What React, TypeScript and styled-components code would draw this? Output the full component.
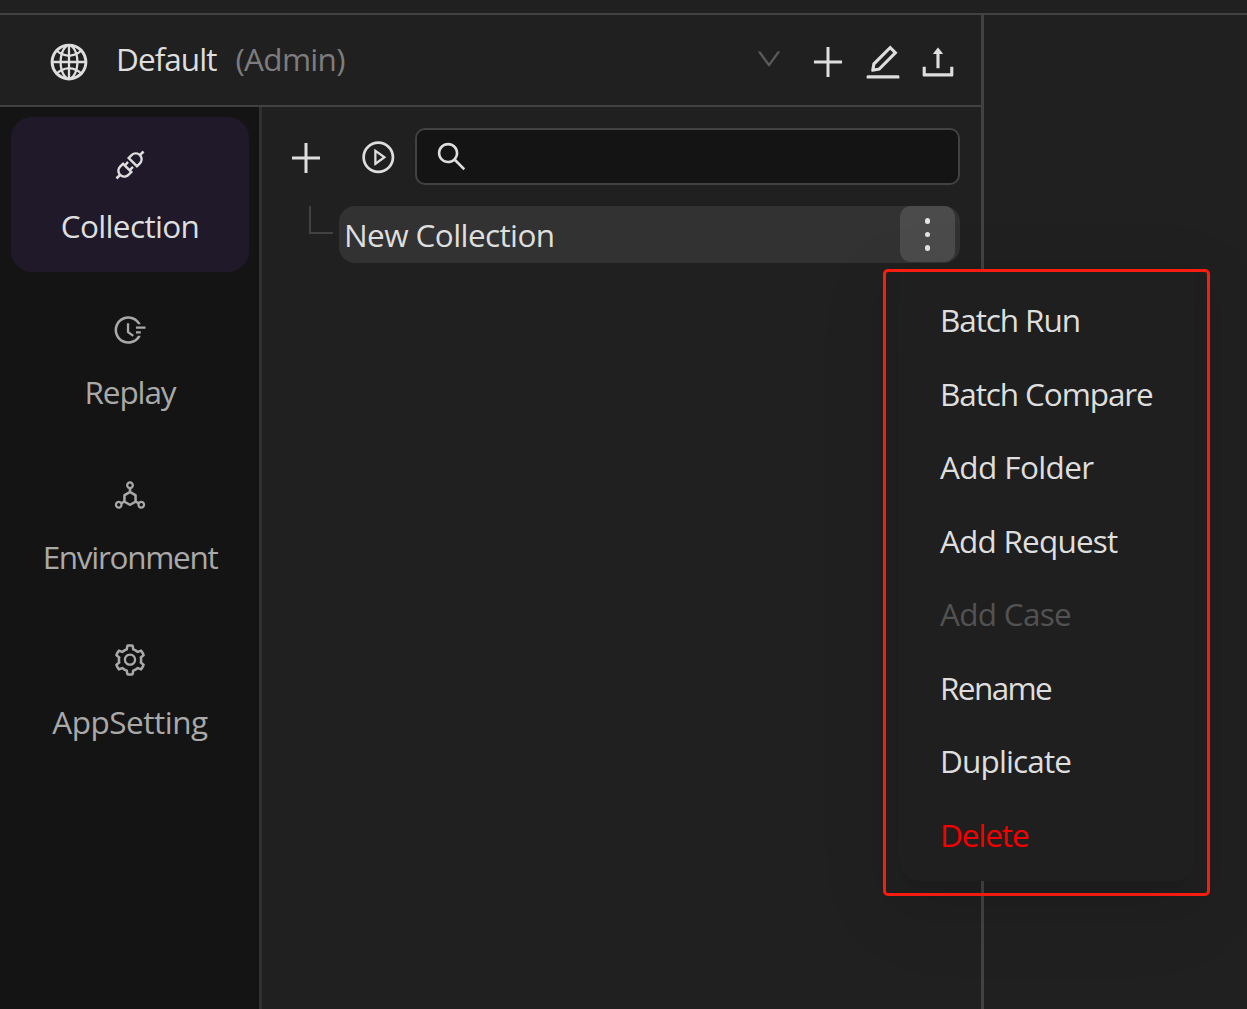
import React from "react";
import styled, { createGlobalStyle } from "styled-components";
import {
  AiOutlineApi,
  AiOutlineDeploymentUnit,
  AiOutlineDown,
  AiOutlineEdit,
  AiOutlineFieldTime,
  AiOutlineGlobal,
  AiOutlinePlayCircle,
  AiOutlineSearch,
  AiOutlineSetting,
  AiOutlineUpload,
} from "react-icons/ai";

const line = "#424242";
const text = "#dedede";

const GlobalStyle = createGlobalStyle`
  * { box-sizing: border-box; }
  body {
    margin: 0;
    background: #202020;
    color: ${text};
    font-family: "Open Sans", "Noto Sans", sans-serif;
    font-size: 31.5px;
    line-height: 44px;
    overflow: hidden;
  }
  svg { display: block; flex: none; }
`;

const Page = styled.div`
  height: 1009px;
  display: flex;
  flex-direction: column;
  overflow: hidden;
`;

const TopStrip = styled.div`
  height: 15px;
  flex: none;
  border-bottom: 2px solid ${line};
`;

const Body = styled.div`
  flex: 1;
  display: flex;
  min-height: 0;
`;

const Workspace = styled.div`
  width: 984px;
  display: flex;
  flex-direction: column;
  border-right: 3px solid ${line};
`;

const Header = styled.header`
  height: 92px;
  flex: none;
  display: flex;
  align-items: center;
  padding: 4px 22px 0 48px;
  border-bottom: 2px solid ${line};
`;

const Label = styled.span<{ $spacing?: number }>`
  white-space: nowrap;
  letter-spacing: ${(p) => p.$spacing ?? 0}px;
`;

const WorkspaceName = styled(Label)`
  margin: -6px 0 0 26px;
`;

const Role = styled(Label)`
  margin: -6px auto 0 19px;
  color: #7d7d7d;
`;

const Arrow = styled.span`
  margin: -6px 23px 0 0;
  color: #5b5b5b;
`;

const HeaderActions = styled.div`
  display: flex;
  gap: 13px;
`;

const Main = styled.div`
  flex: 1;
  display: flex;
  min-height: 0;
`;

const Sidebar = styled.nav`
  width: 262px;
  flex: none;
  padding: 10px 10px 0 11px;
  display: flex;
  flex-direction: column;
  gap: 10.3px;
  background: #141414;
  border-right: 3px solid #303030;
`;

const NavItem = styled.div<{ $active?: boolean }>`
  height: 155px;
  flex: none;
  border-radius: 21px;
  display: flex;
  flex-direction: column;
  align-items: center;
  padding-top: 29.6px;
  gap: 21.7px;
  color: ${(p) => (p.$active ? text : "#a9a9a9")};
  background: ${(p) => (p.$active ? "#201929" : "transparent")};
`;

const Panel = styled.section`
  flex: 1;
  padding: 21px 21px 0 23px;
`;

const Toolbar = styled.div`
  display: flex;
  align-items: center;
  height: 57px;
`;

const AddButton = styled.div`
  margin-top: 3px;
`;

const PlayButton = styled.div`
  margin: 2px 18.5px 0 32.5px;
`;

const SearchBox = styled.div`
  flex: 1;
  height: 57px;
  display: flex;
  align-items: center;
  padding-left: 17px;
  border: 2px solid ${line};
  border-radius: 10px;
  background: #141414;
`;

const TreeRow = styled.div`
  display: flex;
  margin-top: 21px;
  padding-left: 24px;
`;

const Branch = styled.div`
  width: 24px;
  height: 28px;
  margin-right: 6px;
  border-left: 2px solid ${line};
  border-bottom: 2px solid ${line};
`;

const TreeNode = styled.div`
  flex: 1;
  height: 57px;
  display: flex;
  align-items: flex-start;
  justify-content: space-between;
  padding: 0 5px;
  border-radius: 16px;
  background: #323232;
`;

const NodeName = styled(Label)`
  padding-top: 7px;
`;

const MoreButton = styled.div`
  width: 55px;
  height: 56px;
  border-radius: 11px;
  background: #4b4b4b;
  display: flex;
  flex-direction: column;
  align-items: center;
  justify-content: center;
  padding-top: 1px;
  gap: 7.8px;
`;

const Dot = styled.i`
  width: 5.6px;
  height: 5.6px;
  border-radius: 50%;
  background: #e4e4e4;
`;

const MenuFrame = styled.div`
  position: absolute;
  left: 883px;
  top: 269px;
  width: 327px;
  height: 627px;
  border: 3px solid #ff1e10;
  border-radius: 5px;
  padding: 0 12px;
`;

const Menu = styled.ul`
  margin: 0;
  height: 609px;
  padding: 11.7px 0 9px;
  list-style: none;
  border-radius: 0 0 21px 21px;
  background: #1f1f1f;
  box-shadow: 0 16px 43px rgba(0, 0, 0, 0.04), 0 8px 16px -11px rgba(0, 0, 0, 0.06),
    0 24px 75px 21px rgba(0, 0, 0, 0.05);
`;

const MenuItem = styled.li<{ $color?: string }>`
  height: 73.5px;
  display: flex;
  align-items: center;
  padding-left: 42px;
  color: ${(p) => p.$color ?? text};
`;

const PlusIcon = () => (
  <svg width="42" height="42" viewBox="0 0 42 42" stroke="currentColor" strokeWidth="3">
    <path d="M7 21h28M21 6v30" />
  </svg>
);

const navItems = [
  { label: "Collection", Icon: AiOutlineApi, spacing: -0.63 },
  { label: "Replay", Icon: AiOutlineFieldTime, spacing: -1.1 },
  { label: "Environment", Icon: AiOutlineDeploymentUnit, spacing: -1.3 },
  { label: "AppSetting", Icon: AiOutlineSetting, spacing: -0.5 },
];

const menuItems: { label: string; spacing: number; color?: string }[] = [
  { label: "Batch Run", spacing: -1.1 },
  { label: "Batch Compare", spacing: -1.1 },
  { label: "Add Folder", spacing: -0.6 },
  { label: "Add Request", spacing: -0.8 },
  { label: "Add Case", spacing: -0.7, color: "#525252" },
  { label: "Rename", spacing: -1.6 },
  { label: "Duplicate", spacing: -0.85 },
  { label: "Delete", spacing: -1.1, color: "#f50000" },
];

export default function App() {
  return (
    <Page>
      <GlobalStyle />
      <TopStrip />
      <Body>
        <Workspace>
          <Header>
            <AiOutlineGlobal size={42} />
            <WorkspaceName $spacing={-0.95}>Default</WorkspaceName>
            <Role $spacing={-0.7}>(Admin)</Role>
            <Arrow>
              <AiOutlineDown size={30} />
            </Arrow>
            <HeaderActions>
              <PlusIcon />
              <AiOutlineEdit size={42} />
              <AiOutlineUpload size={42} />
            </HeaderActions>
          </Header>
          <Main>
            <Sidebar>
              {navItems.map(({ label, Icon, spacing }, i) => (
                <NavItem key={label} $active={i === 0}>
                  <Icon size={36} />
                  <Label $spacing={spacing}>{label}</Label>
                </NavItem>
              ))}
            </Sidebar>
            <Panel>
              <Toolbar>
                <AddButton>
                  <PlusIcon />
                </AddButton>
                <PlayButton>
                  <AiOutlinePlayCircle size={36.6} />
                </PlayButton>
                <SearchBox>
                  <AiOutlineSearch size={35} />
                </SearchBox>
              </Toolbar>
              <TreeRow>
                <Branch />
                <TreeNode>
                  <NodeName $spacing={-0.6}>New Collection</NodeName>
                  <MoreButton>
                    <Dot />
                    <Dot />
                    <Dot />
                  </MoreButton>
                </TreeNode>
              </TreeRow>
            </Panel>
          </Main>
        </Workspace>
      </Body>
      <MenuFrame>
        <Menu>
          {menuItems.map((item) => (
            <MenuItem key={item.label} $color={item.color}>
              <Label $spacing={item.spacing}>{item.label}</Label>
            </MenuItem>
          ))}
        </Menu>
      </MenuFrame>
    </Page>
  );
}
